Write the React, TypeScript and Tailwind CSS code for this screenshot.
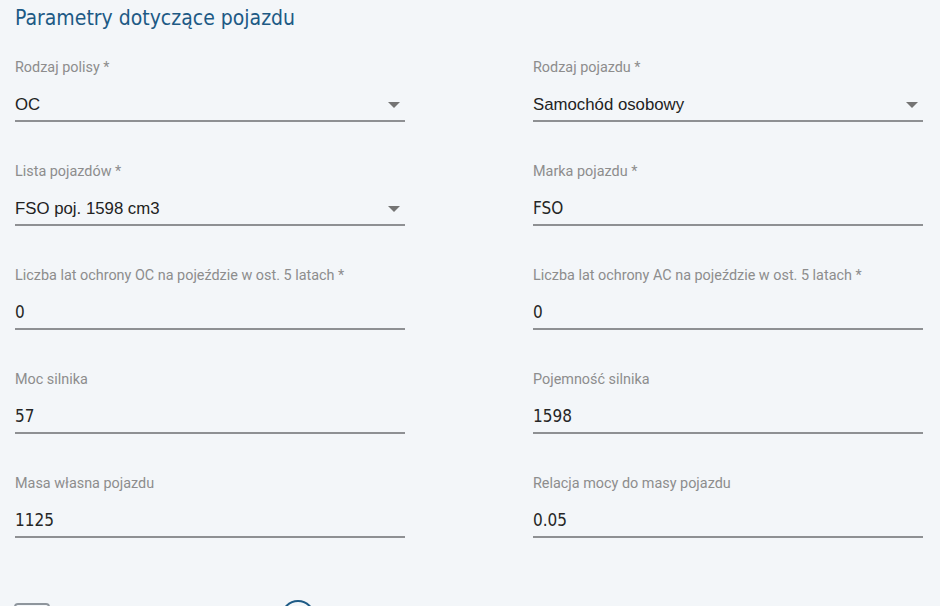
const FIELDS: { label: string; value: string; select?: boolean }[] = [
  { label: 'Rodzaj polisy *', value: 'OC', select: true },
  { label: 'Rodzaj pojazdu *', value: 'Samochód osobowy', select: true },
  { label: 'Lista pojazdów *', value: 'FSO poj. 1598 cm3', select: true },
  { label: 'Marka pojazdu *', value: 'FSO' },
  { label: 'Liczba lat ochrony OC na pojeździe w ost. 5 latach *', value: '0' },
  { label: 'Liczba lat ochrony AC na pojeździe w ost. 5 latach *', value: '0' },
  { label: 'Moc silnika', value: '57' },
  { label: 'Pojemność silnika', value: '1598' },
  { label: 'Masa własna pojazdu', value: '1125' },
  { label: 'Relacja mocy do masy pojazdu', value: '0.05' },
];

function Field({ label, value, select }: { label: string; value: string; select?: boolean }) {
  return (
    <div className="flex flex-col">
      <span className="h-5 text-[14.4px] leading-5 text-[#8d8d8d] font-['Roboto',sans-serif]">{label}</span>
      <div className="mt-[10px] h-[34px] pt-[2px] flex items-center justify-between border-b-2 border-[#8e9093]">
        {select ? (
          <span className="text-[16.8px] text-[#222] font-['Liberation_Sans',Arial,sans-serif]">{value}</span>
        ) : (
          <span className="text-[17px] text-[#262626] font-['DejaVu_Sans_Condensed','Roboto',sans-serif]">{value}</span>
        )}
        {select && (
          <svg width="12" height="6" viewBox="0 0 12 6" className="mr-[5px]">
            <path d="M0 0h12L6 6z" fill="#747474" />
          </svg>
        )}
      </div>
    </div>
  );
}

export default function App() {
  return (
    <div className="w-[940px] h-[606px] overflow-hidden bg-[#f3f6f9] pl-[15px] pr-[17px]">
      {/* Section header */}
      <h2 className="h-9 leading-9 text-[21px] text-[#1d5a85] font-['DejaVu_Sans_Condensed','Roboto',sans-serif]">
        Parametry dotyczące pojazdu
      </h2>

      <div className="mt-[22px] grid grid-cols-2 gap-x-[128px] gap-y-[40px]">
        {FIELDS.map((f) => (
          <Field key={f.label} {...f} />
        ))}
      </div>

      {/* Bottom row, cut off */}
      <div className="mt-[65px] flex items-start">
        <div className="w-[36px] h-[30px] rounded-[4px] border-2 border-[#8e959c] -ml-px" />
        <div className="ml-[231px] -mt-[3px] w-[34px] h-[34px] rounded-full border-2 border-[#1d5a85]" />
      </div>
    </div>
  );
}
